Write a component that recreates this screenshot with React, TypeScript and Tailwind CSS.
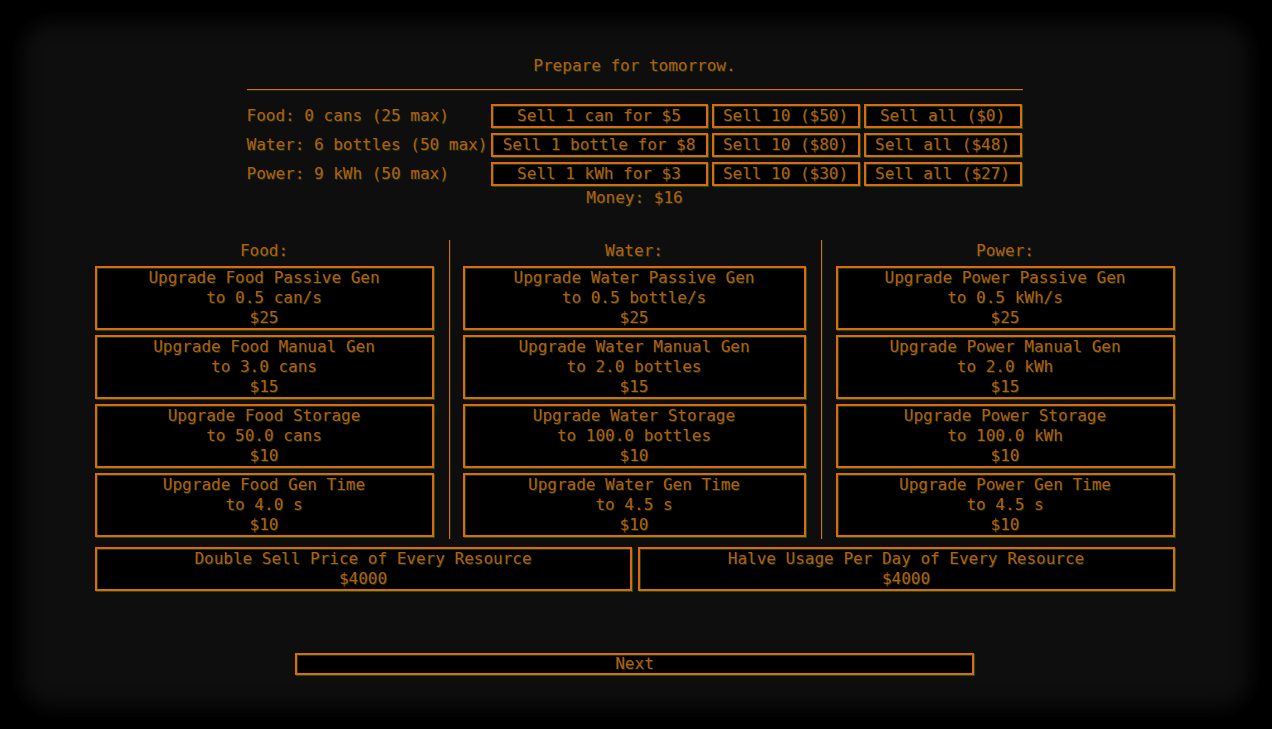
import React from "react";

const glow = "[text-shadow:1px_0.5px_0_rgba(30,120,20,0.45)]";

function Box({
  lines,
  className = "",
}: {
  lines: string[];
  className?: string;
}) {
  return (
    <div
      className={
        "border-2 border-[#e2660c] bg-black text-center leading-[20px] shadow-[1px_1px_0_rgba(30,140,20,0.55),inset_1px_1px_0_rgba(30,140,20,0.45)] " +
        className
      }
    >
      {lines.map((l, i) => (
        <div key={i} className="whitespace-pre">
          {l}
        </div>
      ))}
    </div>
  );
}

function Divider() {
  return <div className="w-px self-stretch bg-[#e0680e] shadow-[1px_0_0_rgba(30,110,20,0.3)]" />;
}

const sellRows = [
  { label: "Food: 0 cans (25 max)", one: "Sell 1 can for $5", ten: "Sell 10 ($50)", all: "Sell all ($0)" },
  { label: "Water: 6 bottles (50 max)", one: "Sell 1 bottle for $8", ten: "Sell 10 ($80)", all: "Sell all ($48)" },
  { label: "Power: 9 kWh (50 max)", one: "Sell 1 kWh for $3", ten: "Sell 10 ($30)", all: "Sell all ($27)" },
];

const columns = [
  {
    title: "Food:",
    pad: "w-[354px] pr-[15px]",
    items: [
      ["Upgrade Food Passive Gen", "to 0.5 can/s", "$25"],
      ["Upgrade Food Manual Gen", "to 3.0 cans", "$15"],
      ["Upgrade Food Storage", "to 50.0 cans", "$10"],
      ["Upgrade Food Gen Time", "to 4.0 s", "$10"],
    ],
  },
  {
    title: "Water:",
    pad: "w-[371px] pl-[13px] pr-[15px]",
    items: [
      ["Upgrade Water Passive Gen", "to 0.5 bottle/s", "$25"],
      ["Upgrade Water Manual Gen", "to 2.0 bottles", "$15"],
      ["Upgrade Water Storage", "to 100.0 bottles", "$10"],
      ["Upgrade Water Gen Time", "to 4.5 s", "$10"],
    ],
  },
  {
    title: "Power:",
    pad: "w-[353px] pl-[14px]",
    items: [
      ["Upgrade Power Passive Gen", "to 0.5 kWh/s", "$25"],
      ["Upgrade Power Manual Gen", "to 2.0 kWh", "$15"],
      ["Upgrade Power Storage", "to 100.0 kWh", "$10"],
      ["Upgrade Power Gen Time", "to 4.5 s", "$10"],
    ],
  },
];

export default function App() {
  return (
    <div className="w-[1272px] h-[729px] bg-black p-[12px] overflow-hidden">
      <div
        className={
          "relative w-full h-full rounded-[42px] bg-[#0e0e0e] text-[16px] text-[#b95c0e] shadow-[inset_0_0_18px_10px_rgba(0,0,0,0.95)] flex flex-col items-center pt-[44px] pr-[3px] " +
          glow
        }
        style={{ fontFamily: '"DejaVu Sans Mono", "Liberation Mono", monospace' }}
      >
        <div className="leading-[20px]">Prepare for tomorrow.</div>
        <div className="mt-[13px] w-[776px] h-px bg-[#e0680e] shadow-[0_1px_0_rgba(30,110,20,0.35)]" />

        <div className="mt-[14px] grid grid-cols-[240px_217px_148px_158px] gap-x-[4px] gap-y-[5px] w-[776px]">
          {sellRows.map((r) => (
            <React.Fragment key={r.label}>
              <div className="leading-[24px] whitespace-nowrap">{r.label}</div>
              <Box lines={[r.one]} />
              <Box lines={[r.ten]} />
              <Box lines={[r.all]} />
            </React.Fragment>
          ))}
        </div>

        <div className="mt-[2px] leading-[20px]">Money: $16</div>

        <div className="mt-[32px] w-[1080px] flex">
          {columns.map((c, ci) => (
            <React.Fragment key={c.title}>
              {ci > 0 && <Divider />}
              <div className={"flex flex-col gap-[5px] pb-[2px] " + c.pad}>
                <div className="text-center leading-[22px] mb-[-1px]">{c.title}</div>
                {c.items.map((it) => (
                  <Box key={it[0]} lines={it} />
                ))}
              </div>
            </React.Fragment>
          ))}
        </div>

        <div className="mt-[8px] w-[1080px] grid grid-cols-2 gap-x-[6px]">
          <Box lines={["Double Sell Price of Every Resource", "$4000"]} />
          <Box lines={["Halve Usage Per Day of Every Resource", "$4000"]} />
        </div>

        <Box lines={["Next"]} className="mt-[62px] w-[679px] !leading-[18px]" />
      </div>
    </div>
  );
}
